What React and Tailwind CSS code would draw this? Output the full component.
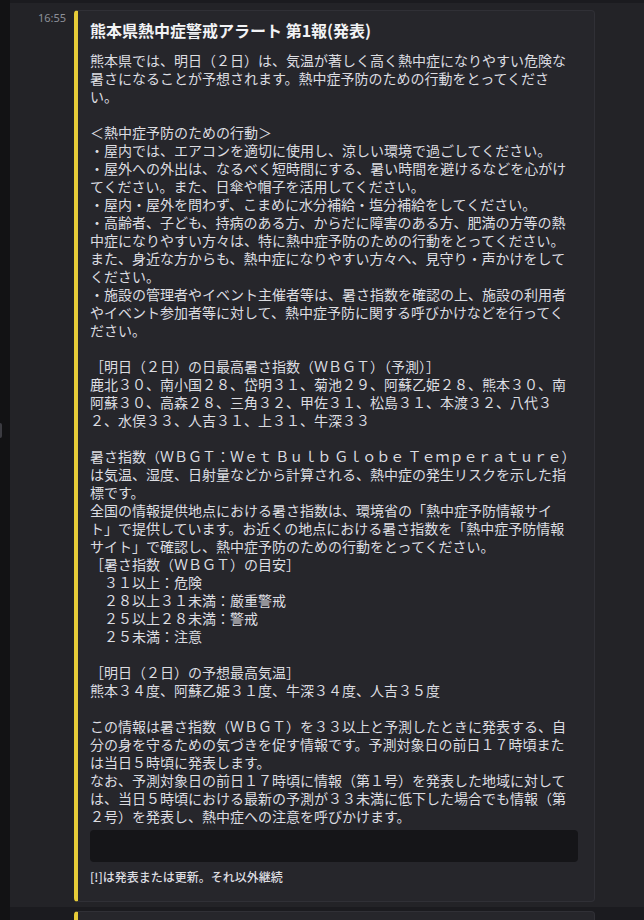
const LINES = [
  "熊本県では、明日（２日）は、気温が著しく高く熱中症になりやすい危険な",
  "暑さになることが予想されます。熱中症予防のための行動をとってくださ",
  "い。",
  "",
  "＜熱中症予防のための行動＞",
  "・屋内では、エアコンを適切に使用し、涼しい環境で過ごしてください。",
  "・屋外への外出は、なるべく短時間にする、暑い時間を避けるなどを心がけ",
  "てください。また、日傘や帽子を活用してください。",
  "・屋内・屋外を問わず、こまめに水分補給・塩分補給をしてください。",
  "・高齢者、子ども、持病のある方、からだに障害のある方、肥満の方等の熱",
  "中症になりやすい方々は、特に熱中症予防のための行動をとってください。",
  "また、身近な方からも、熱中症になりやすい方々へ、見守り・声かけをして",
  "ください。",
  "・施設の管理者やイベント主催者等は、暑さ指数を確認の上、施設の利用者",
  "やイベント参加者等に対して、熱中症予防に関する呼びかけなどを行ってく",
  "ださい。",
  "",
  "［明日（２日）の日最高暑さ指数（ＷＢＧＴ）（予測）］",
  "鹿北３０、南小国２８、岱明３１、菊池２９、阿蘇乙姫２８、熊本３０、南",
  "阿蘇３０、高森２８、三角３２、甲佐３１、松島３１、本渡３２、八代３",
  "２、水俣３３、人吉３１、上３１、牛深３３",
  "",
  "暑さ指数（ＷＢＧＴ：Ｗｅｔ Ｂｕｌｂ Ｇｌｏｂｅ Ｔｅｍｐｅｒａｔｕｒｅ）",
  "は気温、湿度、日射量などから計算される、熱中症の発生リスクを示した指",
  "標です。",
  "全国の情報提供地点における暑さ指数は、環境省の「熱中症予防情報サイ",
  "ト」で提供しています。お近くの地点における暑さ指数を「熱中症予防情報",
  "サイト」で確認し、熱中症予防のための行動をとってください。",
  "［暑さ指数（ＷＢＧＴ）の目安］",
  "　３１以上：危険",
  "　２８以上３１未満：厳重警戒",
  "　２５以上２８未満：警戒",
  "　２５未満：注意",
  "",
  "［明日（２日）の予想最高気温］",
  "熊本３４度、阿蘇乙姫３１度、牛深３４度、人吉３５度",
  "",
  "この情報は暑さ指数（ＷＢＧＴ）を３３以上と予測したときに発表する、自",
  "分の身を守るための気づきを促す情報です。予測対象日の前日１７時頃また",
  "は当日５時頃に発表します。",
  "なお、予測対象日の前日１７時頃に情報（第１号）を発表した地域に対して",
  "は、当日５時頃における最新の予測が３３未満に低下した場合でも情報（第",
  "２号）を発表し、熱中症への注意を呼びかけます。",
];

export default function App() {
  return (
    <div
      className="relative h-[920px] overflow-hidden flex bg-[#1b1b1f]"
      style={{ fontFamily: '"Noto Sans", "Noto Sans CJK JP", sans-serif' }}
    >
      <div className="w-[10px] shrink-0 bg-[#121214]" />
      <div className="flex-1 pt-[3px]">
        <div className="flex bg-[#232327] pt-[7px] pb-[5px]">
          <div className="w-[64px] shrink-0 pr-[8px] text-right text-[11px] leading-[15px] text-[#8d9098]">
            16:55
          </div>
          <div className="w-[521px] shrink-0 rounded-[4px] border border-[#303036] border-l-4 border-l-[#e6cb38] bg-[#26262b] pt-[8px] pr-[16px] pb-[16px] pl-[12px]">
            <div
              className="text-[16px] leading-[22px] font-bold text-[#f2f3f5]"
              style={{ fontFamily: '"Noto Sans CJK JP", "Noto Sans", sans-serif' }}
            >
              熊本県熱中症警戒アラート 第1報(発表)
            </div>
            <div
              className="mt-[10px] text-[14px] leading-[18px] text-[#dcdde1] whitespace-pre"
              style={{ fontFamily: '"Noto Sans CJK JP", sans-serif' }}
            >
              {LINES.map((l, i) => (
                <div key={i} className="h-[18px]">
                  {l}
                </div>
              ))}
            </div>
            <div className="mt-[5px] h-[32px] rounded-[4px] bg-[#151518]" />
            <div
              className="mt-[7px] text-[12px] leading-[16px] font-medium text-[#dcdde1]"
              style={{ fontFamily: '"Noto Sans CJK JP", sans-serif' }}
            >
              [!]は発表または更新。それ以外継続
            </div>
          </div>
        </div>
        <div className="flex pt-[4px]">
          <div className="w-[64px] shrink-0" />
          <div className="w-[521px] h-[80px] shrink-0 rounded-[4px] border border-[#303036] border-l-4 border-l-[#e6cb38] bg-[#26262b]" />
        </div>
      </div>
      <div className="absolute left-0 top-[423px] w-[2px] h-[15px] rounded-r-sm bg-[#3b3b41]" />
    </div>
  );
}
